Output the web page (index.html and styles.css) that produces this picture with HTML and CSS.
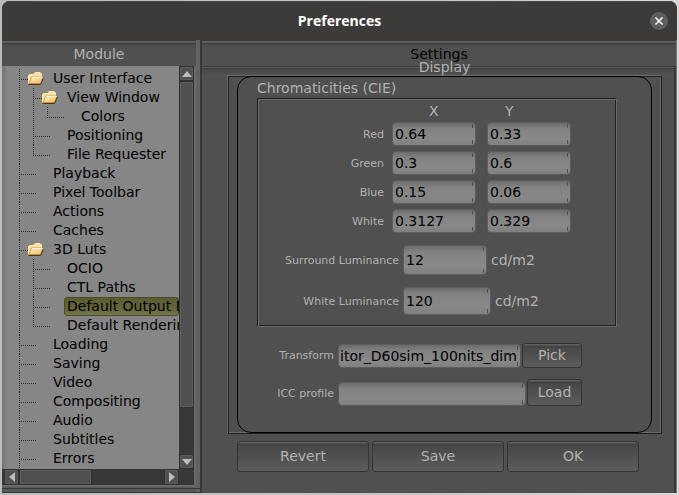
FILE: index.html
```html
<!DOCTYPE html>
<html lang="en">
<head>
<meta charset="utf-8">
<title>Preferences</title>
<link rel="stylesheet" href="styles.css">
</head>
<body>
<svg class="defs" aria-hidden="true">
  <defs>
    <linearGradient id="fold" x1="0" y1="0" x2="1" y2="1">
      <stop offset="0" stop-color="#fff2c4"/>
      <stop offset="1" stop-color="#f2b95c"/>
    </linearGradient>
    <symbol id="folder" viewBox="0 0 16 13">
      <path d="M.5 11.500V3.500L2 2.500h3.500l1.500-2h5l1.500 1.500v3" fill="#fbe3a4" stroke="#ffeab4"/>
      <path d="M1 11.500L3.500 5h11.500L12.500 11.500z" fill="url(#fold)" stroke="#c48a44" stroke-width=".8"/>
      <path d="M4 5.500h10.500" stroke="#fff6d8"/>
      <path d="M.5 12.500h12L15.500 6" fill="none" stroke="#4d3514"/>
    </symbol>
  </defs>
</svg>
<div class="window">
  <header class="titlebar">
    <h1>Preferences</h1>
    <button class="close" aria-label="Close"><svg viewBox="0 0 18 18"><path d="M5.500 5.500l7 7M12.500 5.500l-7 7"/></svg></button>
  </header>
  <div class="body">
    <nav class="modules">
      <h2 class="head">Module</h2>
      <div class="browser">
        <ul class="tree">
          <li><div class="row"><svg class="icon"><use href="#folder"/></svg>User Interface</div>
            <ul>
              <li><div class="row"><svg class="icon"><use href="#folder"/></svg>View Window</div>
                <ul><li><div class="row">Colors</div></li></ul>
              </li>
              <li><div class="row">Positioning</div></li>
              <li><div class="row">File Requester</div></li>
            </ul>
          </li>
          <li><div class="row">Playback</div></li>
          <li><div class="row">Pixel Toolbar</div></li>
          <li><div class="row">Actions</div></li>
          <li><div class="row">Caches</div></li>
          <li><div class="row"><svg class="icon"><use href="#folder"/></svg>3D Luts</div>
            <ul>
              <li><div class="row">OCIO</div></li>
              <li><div class="row">CTL Paths</div></li>
              <li><div class="row selected"><span>Default Output Display</span></div></li>
              <li><div class="row">Default Rendering</div></li>
            </ul>
          </li>
          <li><div class="row">Loading</div></li>
          <li><div class="row">Saving</div></li>
          <li><div class="row">Video</div></li>
          <li><div class="row">Compositing</div></li>
          <li><div class="row">Audio</div></li>
          <li><div class="row">Subtitles</div></li>
          <li><div class="row">Errors</div></li>
        </ul>
        <div class="scroll vertical">
          <button class="arrow" aria-label="Scroll up"><svg viewBox="0 0 10 6"><path d="M0 6L5 0l5 6z"/></svg></button>
          <div class="thumb"></div>
          <button class="arrow" aria-label="Scroll down"><svg viewBox="0 0 10 6"><path d="M0 0h10L5 6z"/></svg></button>
        </div>
        <div class="scroll horizontal">
          <button class="arrow" aria-label="Scroll left"><svg viewBox="0 0 6 10"><path d="M6 0v10L0 5z"/></svg></button>
          <div class="thumb"></div>
          <button class="arrow" aria-label="Scroll right"><svg viewBox="0 0 6 10"><path d="M0 0v10l6-5z"/></svg></button>
        </div>
      </div>
    </nav>
    <main class="settings">
      <h2 class="head dark">Settings</h2>
      <div class="pane">
        <h3 class="page-title">Display</h3>
        <section class="group">
          <div class="rounded">
            <h4>Chromaticities (CIE)</h4>
            <div class="box">
              <div class="chroma">
                <span></span><span class="axis-x">X</span><span class="axis-y">Y</span>
                <label for="rx">Red</label><input id="rx" value="0.64"><input aria-label="Red Y" value="0.33">
                <label for="gx">Green</label><input id="gx" value="0.3"><input aria-label="Green Y" value="0.6">
                <label for="bx">Blue</label><input id="bx" value="0.15"><input aria-label="Blue Y" value="0.06">
                <label for="wx">White</label><input id="wx" value="0.3127"><input aria-label="White Y" value="0.329">
              </div>
              <div class="luminance">
                <label for="sl">Surround Luminance</label><input id="sl" class="surround" value="12"><span>cd/m2</span>
              </div>
              <div class="luminance">
                <label for="wl">White Luminance</label><input id="wl" class="white" value="120"><span>cd/m2</span>
              </div>
            </div>
            <div class="file">
              <label for="tr">Transform</label><input id="tr" value="itor_D60sim_100nits_dim"><button class="btn pick">Pick</button>
            </div>
            <div class="file">
              <label for="icc">ICC profile</label><input id="icc" value=""><button class="btn load">Load</button>
            </div>
          </div>
        </section>
        <div class="actions">
          <button class="btn">Revert</button>
          <button class="btn">Save</button>
          <button class="btn">OK</button>
        </div>
      </div>
    </main>
  </div>
</div>
</body>
</html>
```
FILE: styles.css
```css
* { box-sizing: border-box; }

body {
  margin: 0;
  height: 100vh;
  padding: 1px 2px 2px;
  background: linear-gradient(90deg, #b9bdb9, #c4c6c4 60%, #d8d8d8);
  font: 14px/19px "DejaVu Sans", sans-serif;
  color: #b2b2b2;
  overflow: hidden;
}

h1, h2, h3, h4 { margin: 0; font-size: 14px; font-weight: normal; }
ul { list-style: none; margin: 0; padding: 0; }
button, input { font: inherit; color: inherit; margin: 0; border: 0; }
.defs { position: absolute; width: 0; height: 0; }

.window {
  height: 100%;
  display: flex;
  flex-direction: column;
  border-radius: 8px 8px 0 0;
  background: #505050;
  overflow: hidden;
}

/* Title bar */
.titlebar {
  flex: 0 0 39px;
  display: grid;
  grid-template-columns: 1fr auto 1fr;
  align-items: center;
  padding: 0 9px;
  background: #3c3b39;
  box-shadow: inset 0 1px #4a4947;
}
.titlebar h1 {
  grid-column: 2;
  font: bold 14px/19px "Open Sans", "Noto Sans", sans-serif;
  color: #fff;
}
.close {
  justify-self: end;
  width: 18px;
  height: 18px;
  padding: 0;
  border-radius: 50%;
  background: #615f5e;
}
.close svg { display: block; width: 18px; height: 18px; stroke: #fff; stroke-width: 1.5; }

.body { flex: 1; min-height: 0; display: flex; }

.head {
  flex: 0 0 26px;
  line-height: 23px;
  padding-top: 3px;
  text-align: center;
  background: linear-gradient(#393939 1px, #606060 1px 2px, #5a5a5a 2px 3px, #3c3c3c 3px 4px, #4a4a4a 4px, #505050 9px);
}
.dark { color: #000; }

/* Module browser */
.modules {
  flex: 0 0 200px;
  display: flex;
  flex-direction: column;
  padding-right: 6px;
  padding-bottom: 6px;
  background:
    linear-gradient(#383838, #383838) 0 100% / 100% 1px no-repeat,
    linear-gradient(#383838, #383838) 0 calc(100% - 4px) / 100% 1px no-repeat,
    linear-gradient(90deg, #585858 194px, #626262 194px 198px, #383838 198px);
}
.browser {
  flex: 1;
  min-height: 0;
  display: grid;
  grid-template: minmax(0, 1fr) 16px / minmax(0, 1fr) 15px;
  background: #383838;
  border-right: 2px solid #6a6a6a;
  border-bottom: 2px solid #6a6a6a;
}
.tree {
  overflow: hidden;
  padding: 3px 0 0 17px;
  background: linear-gradient(90deg, #747474, #868686 6px);
  color: #000;
}
.tree li {
  background: repeating-linear-gradient(#2c2c2c 0 1px, transparent 1px 2px) 0 0 / 1px 100% no-repeat;
}
.tree > li:last-child { padding-bottom: 6px; }
.tree ul { margin-left: 14px; }
.tree ul > li:last-child { background-size: 1px 11px; }
.row {
  position: relative;
  height: 19px;
  padding-left: 34px;
  white-space: nowrap;
  background: repeating-linear-gradient(90deg, #2c2c2c 0 1px, transparent 1px 2px) 0 10px / 17px 1px no-repeat;
}
.icon { position: absolute; left: 9px; top: 3px; width: 16px; height: 13px; }
.selected { padding-left: 31px; overflow: hidden; }
.selected span {
  display: block;
  line-height: 17px;
  padding-left: 2px;
  border: 1px solid #4a4b20;
  border-radius: 3px;
  background: linear-gradient(#5a5b32, #66673d 70%, #76774b);
}

.scroll { display: flex; }
.vertical { flex-direction: column; }
.horizontal { flex-direction: row; padding-left: 2px; }
.arrow {
  flex: 0 0 15px;
  display: grid;
  place-items: center;
  padding: 0;
  background: #505050;
  border: 1px solid #303030;
  border-radius: 2px;
  box-shadow: inset 0 0 0 1px #5b5b5b;
}
.arrow svg { fill: #bdbdbd; }
.vertical .arrow svg { width: 10px; height: 6px; }
.horizontal .arrow svg { width: 6px; height: 10px; }
.thumb {
  background: #505050;
  border: 1px solid #303030;
  border-radius: 2px;
  box-shadow: inset 0 0 0 1px #5e5e5e;
}
.vertical .thumb { flex: 0 1 327px; margin-bottom: auto; }
.horizontal .thumb { flex: 0 1 73px; margin-right: auto; }

/* Settings */
.settings {
  flex: 1;
  min-width: 0;
  display: flex;
  flex-direction: column;
  border-right: 1px solid #777;
}
.pane {
  flex: 1;
  padding: 0 12px 0 25px;
  border-right: 2px solid #383838;
  background: linear-gradient(#606060 1px, #3c3c3c 1px 2px, #484848 2px, #505050 8px);
  border-top: 1px solid #3a3a3a;
}
.page-title { line-height: 16px; margin-top: -8px; text-align: center; }
.group {
  border: 1px solid #202020;
  border-left-color: #6c6c6c;
  border-top-color: #6c6c6c;
  box-shadow: inset 1px 1px #202020, inset -1px -1px #6c6c6c;
  padding: 0 9px;
}
.rounded {
  border: 1px solid #000;
  border-radius: 14px;
  padding: 2px 34px 26px 19px;
}
h4 { line-height: 19px; }
.box {
  border: 1px solid #202020;
  border-right-color: #6c6c6c;
  border-bottom-color: #6c6c6c;
  box-shadow: inset 1px 1px #6c6c6c, inset -1px -1px #202020;
  padding: 6px 1px 11px;
}
label { font-size: 11px; text-align: right; }

input {
  min-width: 0;
  height: 24px;
  padding: 0 2px 1px;
  border: 1px solid #5c5c5c;
  border-radius: 4px;
  color: #000;
  background:
    linear-gradient(#505050, #505050) right 2px top 1px / 1px 4px no-repeat,
    linear-gradient(#505050, #505050) right 2px bottom 1px / 1px 4px no-repeat,
    linear-gradient(#6c6c6c, #828282 6px, #888 70%, #808080);
}

.chroma {
  display: grid;
  grid-template-columns: 125px 87px 84px;
  grid-template-rows: 12px;
  gap: 5px 8px;
  align-items: center;
}
.chroma input { width: 84px; }
.axis-x { padding-left: 37px; line-height: 12px; }
.axis-y { padding-left: 18px; line-height: 12px; }

.luminance { display: flex; align-items: center; margin-top: 12px; }
.luminance label { width: 140px; margin-right: 4px; }
.luminance span { margin-left: 4px; }
.surround { width: 84px; height: 30px; }
.white { width: 88px; height: 28px; }

.file { display: flex; align-items: flex-end; width: 325px; margin-top: 11px; }
.box + .file { margin-top: 16px; }
.file label { flex: 0 0 77px; margin-right: 4px; line-height: 24px; }
.file input { flex: 1; padding: 0 0 1px 1px; margin-right: 1px; }
.btn {
  height: 31px;
  padding: 0;
  border: 1px solid #333;
  border-radius: 3px;
  background: linear-gradient(#606060 1px, #424242 2px 3px, #484848 4px, #505050 50%, #5c5c5c);
}
.pick { flex: 0 0 60px; height: 25px; }
.load { flex: 0 0 55px; height: 27px; }

.actions { display: flex; gap: 3px; margin-top: 7px; padding: 0 23px 0 10px; }
.actions .btn { flex: 1; }
```
